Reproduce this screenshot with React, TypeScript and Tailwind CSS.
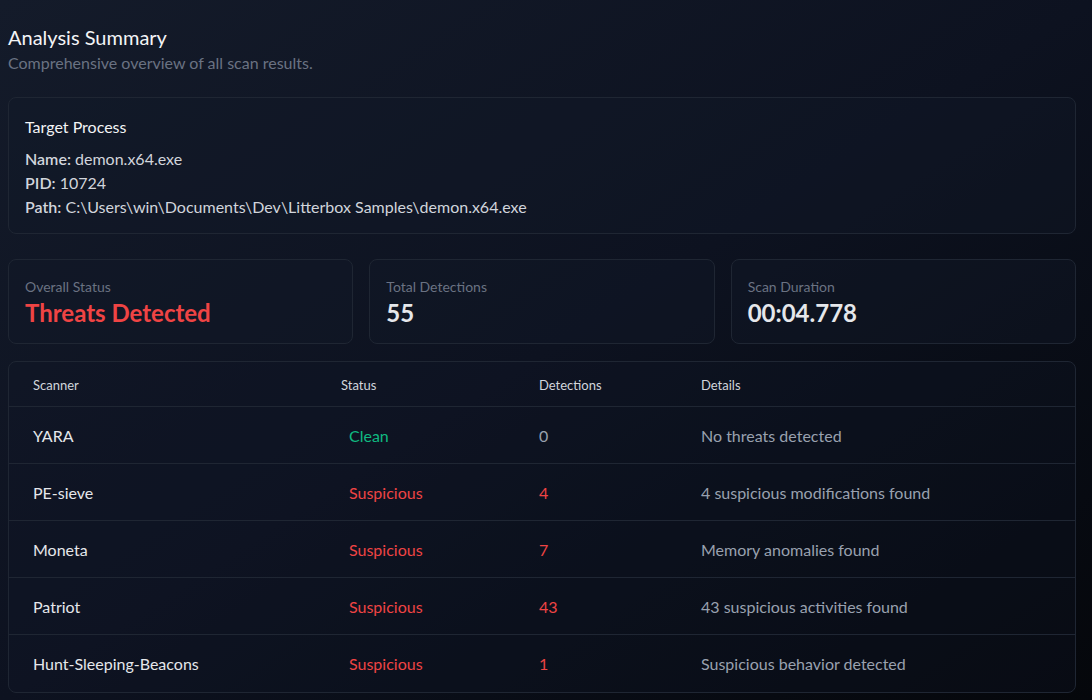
import React from "react";

const rows = [
  { name: "YARA", status: "Clean", count: 0, details: "No threats detected" },
  { name: "PE-sieve", status: "Suspicious", count: 4, details: "4 suspicious modifications found" },
  { name: "Moneta", status: "Suspicious", count: 7, details: "Memory anomalies found" },
  { name: "Patriot", status: "Suspicious", count: 43, details: "43 suspicious activities found" },
  { name: "Hunt-Sleeping-Beacons", status: "Suspicious", count: 1, details: "Suspicious behavior detected" },
];

export default function App() {
  return (
    <div
      className="min-h-[700px] w-full bg-gradient-to-br from-[#141b2a] via-[#0d1220] to-[#05070b] text-gray-100 pt-[23px] pl-2 pr-4"
      style={{ fontFamily: "Lato, 'Noto Sans', sans-serif" }}
    >
      {/* Header */}
      <h1 className="text-[20px] leading-7 text-gray-100">Analysis Summary</h1>
      <p className="text-[16px] leading-6 text-gray-500">Comprehensive overview of all scan results.</p>

      {/* Target Process */}
      <div className="mt-[22px] rounded-lg border border-[#1f2633] bg-[#111827]/40 px-4 pt-[17px] pb-[14px]">
        <h3 className="text-[16px] leading-6 text-gray-100 mb-2">Target Process</h3>
        <div className="text-[16px] leading-6 text-gray-300">
          <p>
            <span className="font-semibold">Name:</span> demon.x64.exe
          </p>
          <p>
            <span className="font-semibold">PID:</span> 10724
          </p>
          <p>
            <span className="font-semibold">Path:</span> C:\Users\win\Documents\Dev\Litterbox Samples\demon.x64.exe
          </p>
        </div>
      </div>

      {/* Stats */}
      <div className="mt-[25px] grid grid-cols-3 gap-4">
        {[
          { label: "Overall Status", value: "Threats Detected", red: true },
          { label: "Total Detections", value: "55" },
          { label: "Scan Duration", value: "00:04.778" },
        ].map((s) => (
          <div key={s.label} className="h-[85px] rounded-lg border border-[#1f2633] bg-[#111827]/40 px-4 pt-[17px]">
            <div className="text-[14px] leading-5 text-gray-500">{s.label}</div>
            <div className={`text-[24px] leading-8 font-bold ${s.red ? "text-[#ef4444]" : "text-gray-200"}`}>
              {s.value}
            </div>
          </div>
        ))}
      </div>

      {/* Table */}
      <div className="mt-[17px] rounded-lg border border-[#1f2633] bg-[#111827]/30 overflow-hidden">
        <div className="grid grid-cols-[308px_198px_162px_1fr] h-[45px] items-center pt-[3px] border-b border-[#1f2633] text-[13px] text-gray-300">
          <div className="pl-6">Scanner</div>
          <div className="pl-6">Status</div>
          <div className="pl-6">Detections</div>
          <div className="pl-6">Details</div>
        </div>
        {rows.map((r, i) => (
          <div
            key={r.name}
            className={`grid grid-cols-[308px_198px_162px_1fr] h-[57px] items-center pt-[1px] text-[16px] ${
              i < rows.length - 1 ? "border-b border-[#1f2633]" : ""
            }`}
          >
            <div className="pl-6 text-gray-200">{r.name}</div>
            <div className="pl-6">
              <span className={`px-2 ${r.status === "Clean" ? "text-[#10b981]" : "text-[#ef4444]"}`}>{r.status}</span>
            </div>
            <div className={`pl-6 ${r.count > 0 ? "text-[#ef4444]" : "text-gray-400"}`}>{r.count}</div>
            <div className="pl-6 text-gray-400">{r.details}</div>
          </div>
        ))}
      </div>
      <div className="h-2" />
    </div>
  );
}
